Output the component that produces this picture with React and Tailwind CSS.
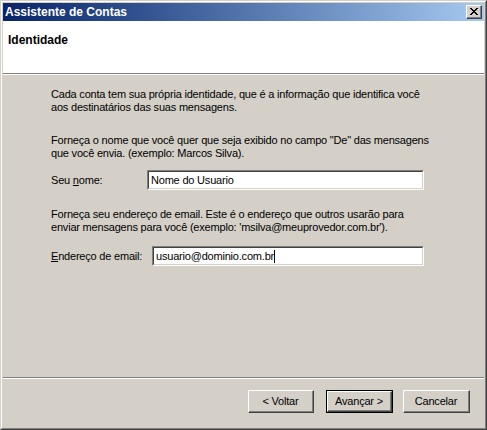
import React from "react";

const font = { fontFamily: '"Liberation Sans", Arial, sans-serif' };

const Sunken = ({ className, children }) => (
    <div className={`border-t border-l border-[#808080] border-r border-b border-r-white border-b-white ${className}`}>
        <div className="h-full border-t border-l border-[#404040] border-r border-b border-r-[#d4d0c8] border-b-[#d4d0c8] bg-white flex items-center pl-[2px] overflow-hidden whitespace-nowrap">
            {children}
        </div>
    </div>
);

const Button = ({ label, isDefault, className = "" }) => {
    const inner = (
        <div className="h-full border-t border-l border-white border-r border-b border-r-[#404040] border-b-[#404040]">
            <div className="h-full border-r border-b border-[#808080] flex items-center justify-center">
                {label}
            </div>
        </div>
    );
    return (
        <div className={`h-[23px] ${className}`}>
            {isDefault ? <div className="h-full border border-black">{inner}</div> : inner}
        </div>
    );
};

export default function App() {
    return (
        <div className="w-[487px] h-[430px] text-[11px] leading-[13px] tracking-[-0.2px] text-black" style={font}>
            <div className="h-full border-t border-l border-[#d4d0c8] border-r border-b border-r-[#404040] border-b-[#404040]">
                <div className="h-full border-t border-l border-white border-r border-b border-r-[#808080] border-b-[#808080] bg-[#d4d0c8] p-px flex flex-col">
                    {/* Title bar */}
                    <div className="h-[18px] flex items-center justify-between pl-[2px] pr-[2px] bg-gradient-to-r from-[#0a246a] to-[#a6caf0]">
                        <span className="font-bold text-white text-[12px] tracking-normal">Assistente de Contas</span>
                        <div className="w-[16px] h-[14px] border-t border-l border-white border-r border-b border-r-[#404040] border-b-[#404040] bg-[#d4d0c8]">
                            <div className="h-full border-r border-b border-[#808080] flex items-center justify-center">
                                <svg width="8" height="7" viewBox="0 0 8 7" shapeRendering="crispEdges">
                                    <path d="M0 0h2v1h-2zM6 0h2v1h-2zM1 1h2v1h-2zM5 1h2v1h-2zM2 2h4v1h-4zM3 3h2v1h-2zM2 4h4v1h-4zM1 5h2v1h-2zM5 5h2v1h-2zM0 6h2v1h-2zM6 6h2v1h-2z" fill="#000" />
                                </svg>
                            </div>
                        </div>
                    </div>

                    {/* Header */}
                    <div className="h-[53px] bg-white pl-[5px] pt-[12px] border-b border-[#808080]">
                        <h1 className="font-bold text-[12px] leading-[14px] tracking-normal">Identidade</h1>
                    </div>
                    <div className="h-px bg-white" />

                    {/* Body */}
                    <div className="flex-1 pl-[48px] pt-[13px]">
                        <p>
                            Cada conta tem sua própria identidade, que é a informação que identifica você
                            <br />
                            aos destinatários das suas mensagens.
                        </p>
                        <p className="mt-[20px]">
                            Forneça o nome que você quer que seja exibido no campo "De" das mensagens
                            <br />
                            que você envia. (exemplo: Marcos Silva).
                        </p>
                        <div className="mt-[10px] flex items-center">
                            <label className="w-[96px]">
                                Seu <span className="underline">n</span>ome:
                            </label>
                            <Sunken className="w-[277px] h-[20px]">Nome do Usuario</Sunken>
                        </div>
                        <p className="mt-[18px]">
                            Forneça seu endereço de email. Este é o endereço que outros usarão para
                            <br />
                            enviar mensagens para você (exemplo: 'msilva@meuprovedor.com.br').
                        </p>
                        <div className="mt-[12px] flex items-center">
                            <label className="w-[101px]">
                                <span className="underline">E</span>ndereço de email:
                            </label>
                            <Sunken className="w-[272px] h-[20px]">
                                usuario@dominio.com.br
                                <span className="inline-block w-px h-[13px] bg-black" />
                            </Sunken>
                        </div>
                    </div>

                    {/* Footer */}
                    <div className="border-t border-[#808080]" />
                    <div className="h-px bg-white" />
                    <div className="h-[48px] flex justify-end pt-[11px] pr-[14px]">
                        <Button label="< Voltar" className="w-[66px]" />
                        <Button label="Avançar >" isDefault className="w-[67px] ml-[12px]" />
                        <Button label="Cancelar" className="w-[67px] ml-[10px]" />
                    </div>
                </div>
            </div>
        </div>
    );
}
